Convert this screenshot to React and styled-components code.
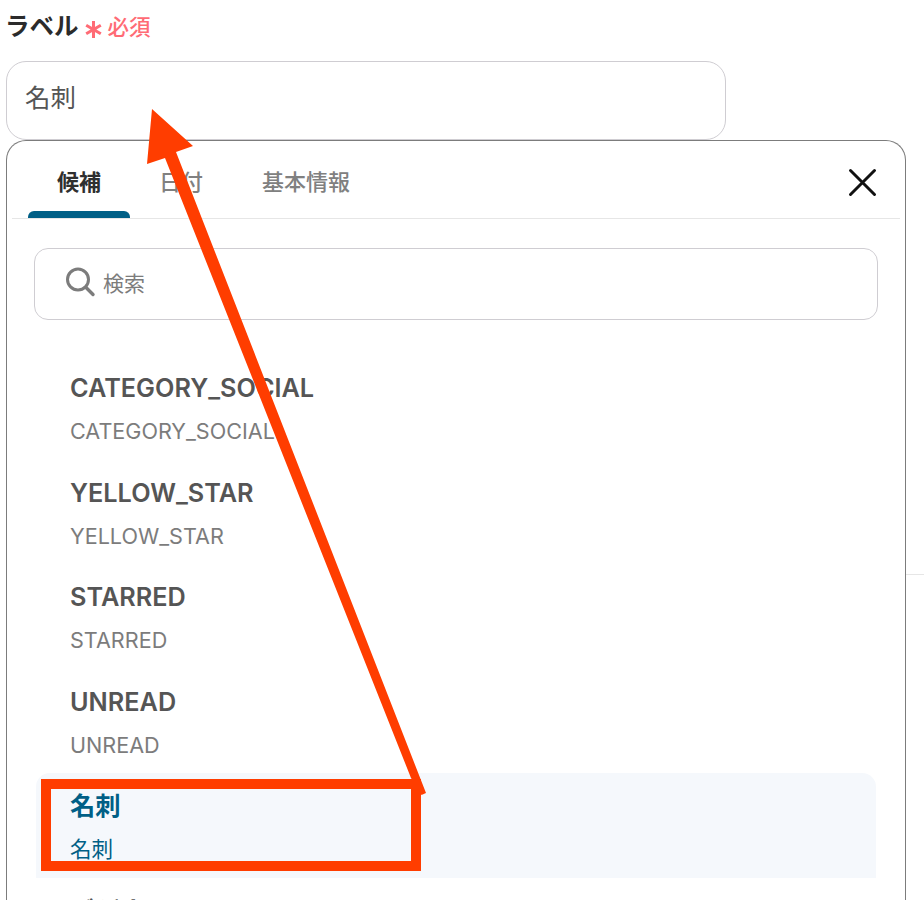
import React from "react";
import styled, { createGlobalStyle } from "styled-components";

const Global = createGlobalStyle`
  html, body { margin: 0; padding: 0; background: #fff; }
  body { font-family: Inter, "Noto Sans CJK JP", sans-serif; }
`;
const Page = styled.div`
  position: relative; width: 924px; height: 900px; overflow: hidden; background: #fff;
  padding: 11px 0 0 6px; box-sizing: border-box;
`;
const LabelRow = styled.div`display: flex; align-items: center; height: 30px; gap: 6px;`;
const Label = styled.span`font-size: 24.5px; font-weight: 600; color: #2b2b2b; line-height: 30px; margin-left: -1px;`;
const Required = styled.span`display: flex; align-items: center; gap: 6px; color: #ff6b75; font-size: 21.5px; font-weight: 500; line-height: 30px; margin-top: 2px;`;
const Star = styled.svg`width: 17px; height: 19px; margin-top: 5px;`;
const NameInput = styled.div`
  margin-top: 20px; width: 720px; height: 79px; box-sizing: border-box; border: 1px solid #cfcdd2;
  border-radius: 20px; padding: 0 18px 11px; display: flex; align-items: center; font-size: 25.5px; color: #555; background:#fff;
`;
const Panel = styled.div`
  width: 900px; height: 800px; box-sizing: border-box; border: 1.5px solid #7c7c7c; border-bottom: none;
  border-radius: 20px 20px 0 0; background: #fff; padding: 0 5px; overflow: hidden;
`;
const TabBar = styled.div`display: flex; height: 77px; border-bottom: 1px solid #e6e6e6; position: relative; padding-left: 16px; align-items: stretch;`;
const Tab = styled.div`
  position: relative; display: flex; align-items: center; justify-content: center; width: ${p => p.$w}px; margin-right: ${p => p.$mr || 0}px;
  font-size: 22px; font-weight: ${p => p.$active ? 600 : 500}; color: ${p => p.$active ? "#2f2f2f" : "#808080"}; box-sizing: border-box;
  ${p => p.$active && `&::after { content: ""; position: absolute; left: 0; right: 0; bottom: 0; height: 7px; background: #005f86; border-radius: 6px 6px 0 0; }`}
`;
const Close = styled.svg`position: absolute; right: 20px; top: 23px; width: 36px; height: 36px;`;
const Body = styled.div`padding: 29px 22px 0 22px;`;
const Search = styled.div`
  height: 72px; box-sizing: border-box; border: 1px solid #cfcdd2; border-radius: 14px; display: flex; align-items: center; padding: 0 0 4px 29px; gap: 7px;
  font-size: 21px; color: #7c7c7c;
`;
const List = styled.div`margin-top: 35px; display: flex; flex-direction: column;`;
const Item = styled.div`
  height: 104.5px; box-sizing: border-box; padding: 18px 0 0 34px; border-radius: 14px 14px 0 0;
  background: ${p => p.$active ? "#f5f8fc" : "transparent"};
  color: ${p => p.$active ? "#005f86" : "#555"};
  margin: 0 2px 0 2px;
`;
const Title = styled.div`font-size: 25.25px; font-weight: 600; line-height: 30px; color: inherit;`;
const Sub = styled.div`font-size: 21.6px; line-height: 30px; margin-top: 13px; color: ${p => p.$active ? "#005f86" : "#7c7c7c"};`;
const FaintLine = styled.div`position: absolute; left: 906px; right: 0; top: 574px; height: 1px; background: #e6e6e6;`;
const Overlay = styled.svg`position: absolute; left: 0; top: 0; width: 924px; height: 900px; pointer-events: none;`;

const items = [
  ["CATEGORY_SOCIAL", "CATEGORY_SOCIAL"],
  ["YELLOW_STAR", "YELLOW_STAR"],
  ["STARRED", "STARRED"],
  ["UNREAD", "UNREAD"],
  ["名刺", "名刺", true],
  ["ビジネスメール", ""],
];

export default function App() {
  return (
    <Page>
      <Global />
      <LabelRow>
        <Label>ラベル</Label>
        <Required>
          <Star viewBox="0 0 17 19"><path d="M8.5 1v17M1.2 5.2l14.6 8.6M15.8 5.2L1.2 13.8" stroke="#ff6b75" strokeWidth="3" fill="none" /></Star>
          必須
        </Required>
      </LabelRow>
      <NameInput>名刺</NameInput>
      <Panel>
        <TabBar>
          <Tab $w={102} $mr={16} $active>候補</Tab>
          <Tab $w={70} $mr={36}>日付</Tab>
          <Tab $w={108}>基本情報</Tab>
          <Close viewBox="0 0 36 36">
            <path d="M6.5 6.5L30.5 30.5M30.5 6.5L6.5 30.5" stroke="#111" strokeWidth="3" strokeLinecap="round" />
          </Close>
        </TabBar>
        <Body>
          <Search>
            <svg width="32" height="32" viewBox="0 0 32 32" fill="none">
              <circle cx="14" cy="13.5" r="10.5" stroke="#7c7c7c" strokeWidth="3" />
              <path d="M22 21.5l7 7" stroke="#7c7c7c" strokeWidth="3.4" strokeLinecap="round" />
            </svg>
            検索
          </Search>
          <List>
            {items.map(([t, s, a]) => (
              <Item key={t} $active={a}>
                <Title>{t}</Title>
                {s && <Sub $active={a}>{s}</Sub>}
              </Item>
            ))}
          </List>
        </Body>
      </Panel>
      <FaintLine />
      <Overlay viewBox="0 0 924 900">
        <polygon points="152,109 193,146 176,152 426,793 421.5,795 411,778 165,158 147,164" fill="#ff3d00" />
        <rect x="46" y="784" width="370" height="82" fill="none" stroke="#ff3d00" strokeWidth="10" />
      </Overlay>
    </Page>
  );
}
